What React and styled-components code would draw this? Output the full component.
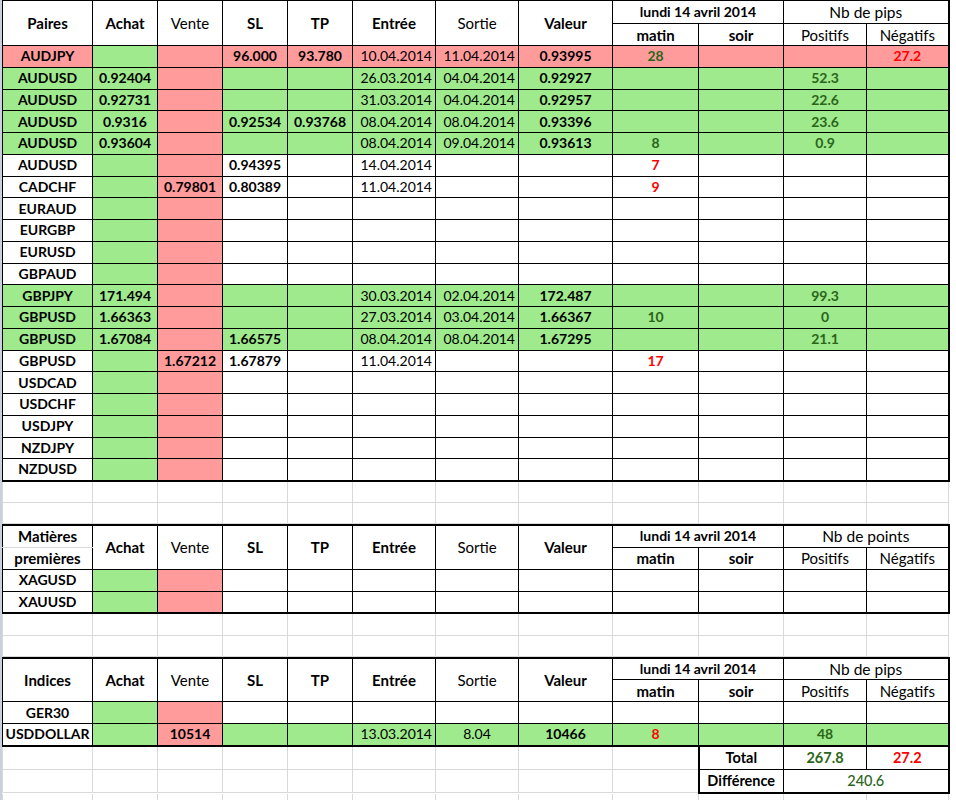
import styled, { createGlobalStyle } from 'styled-components';

const GREEN = '#9eea8d';
const PINK = '#ff9b9b';
const INK_GREEN = '#2b6519';
const INK_RED = '#ff0000';
const GRID = '#d9d9d9';

const COLS = [90, 65, 65, 65, 65, 83, 83, 94, 86, 85, 83, 82];

const GlobalStyle = createGlobalStyle`
    html, body {
        margin: 0;
        padding: 0;
        background: #fff;
    }

    body {
        font-family: Lato, "Liberation Sans", sans-serif;
        font-size: 14px;
        color: #000;
    }
`;

const forex = [
    { pair: 'AUDJPY', tone: 'sell', sl: '96.000', tp: '93.780', entree: '10.04.2014', sortie: '11.04.2014', valeur: '0.93995', matin: '28', matinGood: true, neg: '27.2' },
    { pair: 'AUDUSD', tone: 'buy', achat: '0.92404', entree: '26.03.2014', sortie: '04.04.2014', valeur: '0.92927', pos: '52.3' },
    { pair: 'AUDUSD', tone: 'buy', achat: '0.92731', entree: '31.03.2014', sortie: '04.04.2014', valeur: '0.92957', pos: '22.6' },
    { pair: 'AUDUSD', tone: 'buy', achat: '0.9316', sl: '0.92534', tp: '0.93768', entree: '08.04.2014', sortie: '08.04.2014', valeur: '0.93396', pos: '23.6' },
    { pair: 'AUDUSD', tone: 'buy', achat: '0.93604', entree: '08.04.2014', sortie: '09.04.2014', valeur: '0.93613', matin: '8', matinGood: true, pos: '0.9' },
    { pair: 'AUDUSD', sl: '0.94395', entree: '14.04.2014', matin: '7' },
    { pair: 'CADCHF', vente: '0.79801', sl: '0.80389', entree: '11.04.2014', matin: '9' },
    { pair: 'EURAUD' },
    { pair: 'EURGBP' },
    { pair: 'EURUSD' },
    { pair: 'GBPAUD' },
    { pair: 'GBPJPY', tone: 'buy', achat: '171.494', entree: '30.03.2014', sortie: '02.04.2014', valeur: '172.487', pos: '99.3' },
    { pair: 'GBPUSD', tone: 'buy', achat: '1.66363', entree: '27.03.2014', sortie: '03.04.2014', valeur: '1.66367', matin: '10', matinGood: true, pos: '0' },
    { pair: 'GBPUSD', tone: 'buy', achat: '1.67084', sl: '1.66575', entree: '08.04.2014', sortie: '08.04.2014', valeur: '1.67295', pos: '21.1' },
    { pair: 'GBPUSD', vente: '1.67212', sl: '1.67879', entree: '11.04.2014', matin: '17' },
    { pair: 'USDCAD' },
    { pair: 'USDCHF' },
    { pair: 'USDJPY' },
    { pair: 'NZDJPY' },
    { pair: 'NZDUSD' },
];

const commodities = [
    { pair: 'XAGUSD' },
    { pair: 'XAUUSD' },
];

const indices = [
    { pair: 'GER30' },
    { pair: 'USDDOLLAR', tone: 'buy', plainPair: true, vente: '10514', entree: '13.03.2014', sortie: '8.04', sortieCentered: true, valeur: '10466', matin: '8', pos: '48' },
];

const toneFill = tone => (tone === 'buy' ? GREEN : tone === 'sell' ? PINK : undefined);

const Columns = () => (
    <colgroup>
        {COLS.map((w, i) => <col key={i} style={{ width: w }} />)}
    </colgroup>
);

const PositionRow = ({ row, height }) => {
    const fill = toneFill(row.tone);

    return (
        <Row $h={height}>
            <Cell $fill={row.plainPair ? undefined : fill} $bold $tight={row.plainPair}>{row.pair}</Cell>
            <Cell $fill={GREEN} $bold>{row.achat}</Cell>
            <Cell $fill={PINK} $bold>{row.vente}</Cell>
            <Cell $fill={fill} $bold>{row.sl}</Cell>
            <Cell $fill={fill} $bold>{row.tp}</Cell>
            <Cell $fill={fill} $right>{row.entree}</Cell>
            <Cell $fill={fill} $right={!row.sortieCentered}>{row.sortie}</Cell>
            <Cell $fill={fill} $bold>{row.valeur}</Cell>
            <Cell $fill={fill} $bold $ink={row.matinGood ? INK_GREEN : INK_RED}>{row.matin}</Cell>
            <Cell $fill={fill} />
            <Cell $fill={fill} $bold $ink={INK_GREEN}>{row.pos}</Cell>
            <Cell $fill={fill} $bold $ink={INK_RED}>{row.neg}</Cell>
        </Row>
    );
};

const Block = ({ title, countLabel, rows, rowHeight = 22, headTop = 22, headBottom = 22, open }) => {
    const split = Array.isArray(title);

    return (
        <Table $open={open}>
            <Columns />
            <thead>
                <Row $h={headTop}>
                    {split
                        ? <Head $split>{title[0]}</Head>
                        : <Head rowSpan={2}>{title}</Head>}
                    <Head rowSpan={2}>Achat</Head>
                    <Head rowSpan={2} $light>Vente</Head>
                    <Head rowSpan={2}>SL</Head>
                    <Head rowSpan={2}>TP</Head>
                    <Head rowSpan={2}>Entrée</Head>
                    <Head rowSpan={2} $light>Sortie</Head>
                    <Head rowSpan={2}>Valeur</Head>
                    <Head colSpan={2} $small>lundi 14 avril 2014</Head>
                    <Head colSpan={2} $light $large>{countLabel}</Head>
                </Row>
                <Row $h={headBottom}>
                    {split && <Head $splitLow>{title[1]}</Head>}
                    <Head>matin</Head>
                    <Head>soir</Head>
                    <Head $light>Positifs</Head>
                    <Head $light>Négatifs</Head>
                </Row>
            </thead>
            <tbody>
                {rows.map((row, i) => <PositionRow key={i} row={row} height={rowHeight} />)}
            </tbody>
        </Table>
    );
};

const Spacer = ({ rows = 2 }) => (
    <BlankTable>
        <Columns />
        <tbody>
            {Array.from({ length: rows }).map((_, r) => (
                <Row key={r} $h={21}>
                    {COLS.map((_, c) => <Blank key={c} />)}
                </Row>
            ))}
        </tbody>
    </BlankTable>
);

const Totals = () => (
    <BlankTable>
        <Columns />
        <tbody>
            <Row $h={23}>
                {COLS.slice(0, 9).map((_, c) => <Blank key={c} />)}
                <SumCell $bold $edgeLeft>Total</SumCell>
                <SumCell $bold $ink={INK_GREEN}>267.8</SumCell>
                <SumCell $bold $ink={INK_RED} $edgeRight>27.2</SumCell>
            </Row>
            <Row $h={23}>
                {COLS.slice(0, 9).map((_, c) => <Blank key={c} />)}
                <SumCell $bold $edgeLeft $edgeBottom>Différence</SumCell>
                <SumCell colSpan={2} $ink={INK_GREEN} $edgeRight $edgeBottom $medium>240.6</SumCell>
            </Row>
        </tbody>
    </BlankTable>
);

const App = () => (
    <>
        <GlobalStyle />
        <Sheet>
            <Block title="Paires" countLabel="Nb de pips" rows={forex} rowHeight={21.75} headTop={23} headBottom={22} open />
            <Spacer />
            <Block title={['Matières', 'premières']} countLabel="Nb de points" rows={commodities} />
            <Spacer />
            <Block title="Indices" countLabel="Nb de pips" rows={indices} headTop={22} headBottom={22} />
            <Totals />
            <Spacer rows={1} />
        </Sheet>
    </>
);

export default App;

const Sheet = styled.div`
    width: 956px;
    height: 800px;
    overflow: hidden;
    box-sizing: border-box;
    border-left: 2px solid #c8d2de;
    background: #fff;
`;

const Table = styled.table`
    table-layout: fixed;
    border-collapse: collapse;
    width: 946px;
    border: 2px solid #000;
    border-left: none;
    ${props => props.$open && `
        border-top: 1px solid #c8c8c8;
    `}
`;

const BlankTable = styled.table`
    table-layout: fixed;
    border-collapse: collapse;
    width: 946px;
    border: none;
`;

const Row = styled.tr`
    height: ${props => props.$h}px;
`;

const Head = styled.th`
    border: 1px solid #000;
    padding: 0 3px;
    font-size: ${props => props.$large ? '15.5px' : props.$small ? '14px' : '15px'};
    font-weight: ${props => props.$light ? 400 : 700};
    text-align: center;
    vertical-align: middle;
    white-space: nowrap;
    overflow: hidden;
    line-height: 16px;

    ${props => props.$split && `
        border-bottom: 1px solid ${GRID};
    `}

    ${props => props.$splitLow && `
        border-top: 1px solid ${GRID};
    `}
`;

const Cell = styled.td`
    border: 1px solid #000;
    padding: ${props => props.$right ? '0 3px 0 0' : props.$tight ? '0 1px' : '0 3px'};
    background: ${props => props.$fill || 'transparent'};
    color: ${props => props.$ink || '#000'};
    font-size: 14px;
    font-weight: ${props => props.$bold ? 700 : 400};
    text-align: ${props => props.$right ? 'right' : 'center'};
    vertical-align: middle;
    white-space: nowrap;
    overflow: hidden;
    line-height: 16px;
`;

const Blank = styled.td`
    border: 1px solid ${GRID};
    border-top: none;
    padding: 0;
`;

const SumCell = styled.td`
    border: 1px solid #000;
    border-top: none;
    border-left-width: ${props => props.$edgeLeft ? '2px' : '1px'};
    border-right-width: ${props => props.$edgeRight ? '2px' : '1px'};
    border-bottom-width: ${props => props.$edgeBottom ? '2px' : '1px'};
    padding: 0 3px;
    color: ${props => props.$ink || '#000'};
    font-size: 14.5px;
    font-weight: ${props => props.$bold ? 700 : props.$medium ? 500 : 400};
    text-align: center;
    vertical-align: middle;
    white-space: nowrap;
    line-height: 16px;
`;
